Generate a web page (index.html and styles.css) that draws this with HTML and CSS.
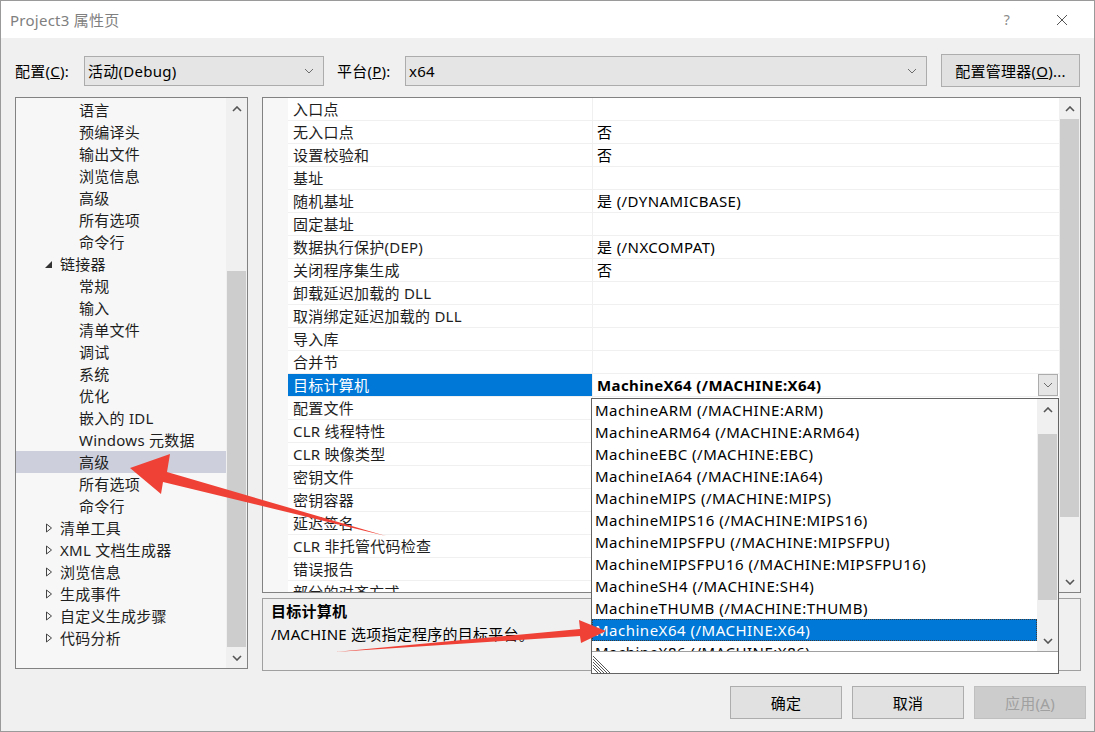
FILE: index.html
```html
<!DOCTYPE html>
<html lang="zh-CN">
<head>
    <meta charset="UTF-8">
    <title>Project3 属性页</title>
    <link rel="stylesheet" href="styles.css">
</head>
<body>
    <div class="window">
        <div class="titlebar">
            <span class="title">Project3 属性页</span>
            <span class="help">?</span>
            <svg class="close" width="12" height="12" viewBox="0 0 12 12">
                <path d="M1 1L11 11M11 1L1 11" stroke="#555" stroke-width="1" fill="none"/>
            </svg>
        </div>

        <div class="toolbar">
            <label class="label label-config">配置(<u>C</u>):</label>
            <div class="combo combo-config">
                <span>活动(Debug)</span>
                <svg class="chev" width="10" height="6" viewBox="0 0 10 6"><path d="M1 1L5 5L9 1" stroke="#6d6d6d" fill="none"/></svg>
            </div>
            <label class="label label-platform">平台(<u>P</u>):</label>
            <div class="combo combo-platform">
                <span>x64</span>
                <svg class="chev" width="10" height="6" viewBox="0 0 10 6"><path d="M1 1L5 5L9 1" stroke="#6d6d6d" fill="none"/></svg>
            </div>
            <button class="btn btn-manager">配置管理器(<u>O</u>)...</button>
        </div>

        <div class="main">
            <div class="tree">
                <ul class="tree-list">
                    <li class="child">语言</li>
                    <li class="child">预编译头</li>
                    <li class="child">输出文件</li>
                    <li class="child">浏览信息</li>
                    <li class="child">高级</li>
                    <li class="child">所有选项</li>
                    <li class="child">命令行</li>
                    <li class="parent"><svg class="exp" width="19" height="22" viewBox="0 0 19 22"><path d="M4 15H11V8Z" fill="#333"/></svg>链接器</li>
                    <li class="child">常规</li>
                    <li class="child">输入</li>
                    <li class="child">清单文件</li>
                    <li class="child">调试</li>
                    <li class="child">系统</li>
                    <li class="child">优化</li>
                    <li class="child">嵌入的 IDL</li>
                    <li class="child">Windows 元数据</li>
                    <li class="child selected">高级</li>
                    <li class="child">所有选项</li>
                    <li class="child">命令行</li>
                    <li class="parent"><svg class="exp" width="19" height="22" viewBox="0 0 19 22"><path d="M5.5 7L10.5 11L5.5 15Z" stroke="#444" fill="none"/></svg>清单工具</li>
                    <li class="parent"><svg class="exp" width="19" height="22" viewBox="0 0 19 22"><path d="M5.5 7L10.5 11L5.5 15Z" stroke="#444" fill="none"/></svg>XML 文档生成器</li>
                    <li class="parent"><svg class="exp" width="19" height="22" viewBox="0 0 19 22"><path d="M5.5 7L10.5 11L5.5 15Z" stroke="#444" fill="none"/></svg>浏览信息</li>
                    <li class="parent"><svg class="exp" width="19" height="22" viewBox="0 0 19 22"><path d="M5.5 7L10.5 11L5.5 15Z" stroke="#444" fill="none"/></svg>生成事件</li>
                    <li class="parent"><svg class="exp" width="19" height="22" viewBox="0 0 19 22"><path d="M5.5 7L10.5 11L5.5 15Z" stroke="#444" fill="none"/></svg>自定义生成步骤</li>
                    <li class="parent"><svg class="exp" width="19" height="22" viewBox="0 0 19 22"><path d="M5.5 7L10.5 11L5.5 15Z" stroke="#444" fill="none"/></svg>代码分析</li>
                </ul>
                <div class="vscroll tree-scroll">
                    <div class="arrow"><svg width="10" height="6" viewBox="0 0 10 6"><path d="M1 5L5 1L9 5" stroke="#555" stroke-width="1.6" fill="none"/></svg></div>
                    <div class="track"><div class="thumb"></div></div>
                    <div class="arrow"><svg width="10" height="6" viewBox="0 0 10 6"><path d="M1 1L5 5L9 1" stroke="#555" stroke-width="1.6" fill="none"/></svg></div>
                </div>
            </div>

            <div class="right">
                <div class="grid">
                    <div class="gutter"></div>
                    <div class="rows">
                        <div class="row"><div class="name">入口点</div><div class="value"></div></div>
                        <div class="row"><div class="name">无入口点</div><div class="value">否</div></div>
                        <div class="row"><div class="name">设置校验和</div><div class="value">否</div></div>
                        <div class="row"><div class="name">基址</div><div class="value"></div></div>
                        <div class="row"><div class="name">随机基址</div><div class="value">是 (/DYNAMICBASE)</div></div>
                        <div class="row"><div class="name">固定基址</div><div class="value"></div></div>
                        <div class="row"><div class="name">数据执行保护(DEP)</div><div class="value">是 (/NXCOMPAT)</div></div>
                        <div class="row"><div class="name">关闭程序集生成</div><div class="value">否</div></div>
                        <div class="row"><div class="name">卸载延迟加载的 DLL</div><div class="value"></div></div>
                        <div class="row"><div class="name">取消绑定延迟加载的 DLL</div><div class="value"></div></div>
                        <div class="row"><div class="name">导入库</div><div class="value"></div></div>
                        <div class="row"><div class="name">合并节</div><div class="value"></div></div>
                        <div class="row active">
                            <div class="name">目标计算机</div>
                            <div class="value">MachineX64 (/MACHINE:X64)
                                <span class="drop-btn"><svg width="10" height="6" viewBox="0 0 10 6"><path d="M1 1L5 5L9 1" stroke="#6d6d6d" fill="none"/></svg></span>
                            </div>
                        </div>
                        <div class="row"><div class="name">配置文件</div><div class="value"></div></div>
                        <div class="row"><div class="name">CLR 线程特性</div><div class="value"></div></div>
                        <div class="row"><div class="name">CLR 映像类型</div><div class="value"></div></div>
                        <div class="row"><div class="name">密钥文件</div><div class="value"></div></div>
                        <div class="row"><div class="name">密钥容器</div><div class="value"></div></div>
                        <div class="row"><div class="name">延迟签名</div><div class="value"></div></div>
                        <div class="row"><div class="name">CLR 非托管代码检查</div><div class="value"></div></div>
                        <div class="row"><div class="name">错误报告</div><div class="value"></div></div>
                        <div class="row"><div class="name">部分的对齐方式</div><div class="value"></div></div>
                    </div>
                    <div class="vscroll grid-scroll">
                        <div class="arrow"><svg width="10" height="6" viewBox="0 0 10 6"><path d="M1 5L5 1L9 5" stroke="#555" stroke-width="1.6" fill="none"/></svg></div>
                        <div class="track"><div class="thumb"></div></div>
                        <div class="arrow"><svg width="10" height="6" viewBox="0 0 10 6"><path d="M1 1L5 5L9 1" stroke="#555" stroke-width="1.6" fill="none"/></svg></div>
                    </div>
                </div>

                <div class="desc">
                    <div class="desc-title">目标计算机</div>
                    <div class="desc-text">/MACHINE 选项指定程序的目标平台。</div>
                </div>

                <div class="dropdown">
                    <div class="drop-body">
                        <ul class="drop-list">
                            <li>MachineARM (/MACHINE:ARM)</li>
                            <li>MachineARM64 (/MACHINE:ARM64)</li>
                            <li>MachineEBC (/MACHINE:EBC)</li>
                            <li>MachineIA64 (/MACHINE:IA64)</li>
                            <li>MachineMIPS (/MACHINE:MIPS)</li>
                            <li>MachineMIPS16 (/MACHINE:MIPS16)</li>
                            <li>MachineMIPSFPU (/MACHINE:MIPSFPU)</li>
                            <li>MachineMIPSFPU16 (/MACHINE:MIPSFPU16)</li>
                            <li>MachineSH4 (/MACHINE:SH4)</li>
                            <li>MachineTHUMB (/MACHINE:THUMB)</li>
                            <li class="picked">MachineX64 (/MACHINE:X64)</li>
                            <li>MachineX86 (/MACHINE:X86)</li>
                        </ul>
                        <div class="vscroll drop-scroll">
                            <div class="arrow"><svg width="10" height="6" viewBox="0 0 10 6"><path d="M1 5L5 1L9 5" stroke="#555" stroke-width="1.6" fill="none"/></svg></div>
                            <div class="track"><div class="thumb"></div></div>
                            <div class="arrow"><svg width="10" height="6" viewBox="0 0 10 6"><path d="M1 1L5 5L9 1" stroke="#555" stroke-width="1.6" fill="none"/></svg></div>
                        </div>
                    </div>
                    <div class="drop-foot">
                        <svg class="grip" width="20" height="19" viewBox="0 0 20 19">
                            <path d="M0 2L17 19M0 5L14 19M0 8L11 19M0 11L8 19M0 14L5 19" stroke="#555" stroke-width="1"/>
                        </svg>
                    </div>
                </div>
            </div>
        </div>

        <div class="buttons">
            <button class="btn">确定</button>
            <button class="btn">取消</button>
            <button class="btn disabled">应用(<u>A</u>)</button>
        </div>
    </div>

    <!-- red annotation arrows drawn over the dialog -->
    <svg class="annotations" width="1095" height="732" viewBox="0 0 1095 732">
        <path d="M130 468L170 454L167 472L386 536L163 482L161 494Z" fill="#ef4136"/>
        <path d="M335 652L580 629L579 620L606 631L581 643L580 636Z" fill="#ef4136"/>
    </svg>
</body>
</html>
```

FILE: styles.css
```css
* {
    margin: 0;
    padding: 0;
    box-sizing: border-box;
}

body {
    font-family: "Noto Sans", "Noto Sans CJK SC", sans-serif;
    font-size: 15px;
    letter-spacing: 0.25px;
    color: #000;
    background: #f0f0f0;
}

ul {
    list-style: none;
}

u {
    text-decoration: underline;
}

.window {
    width: 1095px;
    height: 732px;
    border: 1px solid #9a9a9a;
    background: #f0f0f0;
    position: relative;
}

/* title bar */
.titlebar {
    height: 37px;
    background: #fff;
    display: flex;
    align-items: center;
    padding-left: 9px;
}

.title {
    color: #808080;
    flex: 1;
}

.help {
    color: #8a8a8a;
    font-size: 14px;
    margin-right: 46px;
}

.close {
    margin-right: 26px;
}

/* config row */
.toolbar {
    display: flex;
    align-items: center;
    height: 33px;
    margin-top: 16px;
    padding-left: 14px;
}

.label {
    white-space: nowrap;
}

.label-config {
    width: 69px;
}

.label-platform {
    width: 68px;
}

.combo {
    height: 30px;
    background: #e5e5e5;
    border: 1px solid #acacac;
    display: flex;
    align-items: center;
    justify-content: space-between;
    padding: 0 9px 0 3px;
}

.combo-config {
    width: 240px;
    margin-right: 13px;
}

.combo-platform {
    width: 522px;
    margin-right: 14px;
}

.btn {
    font-family: inherit;
    font-size: 15px;
    letter-spacing: inherit;
    color: #000;
    background: #e1e1e1;
    border: 1px solid #adadad;
    height: 33px;
    width: 112px;
}

.btn-manager {
    width: 139px;
}

.btn.disabled {
    background: #cccccc;
    border-color: #bfbfbf;
    color: #a0a0a0;
}

/* main panes */
.main {
    display: flex;
    margin-top: 10px;
    padding-left: 14px;
    height: 572px;
}

.tree {
    width: 233px;
    height: 572px;
    border: 1px solid #828282;
    background: #f7f7f7;
    display: flex;
    overflow: hidden;
}

.tree-list {
    width: 210px;
    padding-top: 1px;
    color: #1e1e1e;
}

.tree-list li {
    height: 22px;
    line-height: 22px;
    white-space: nowrap;
    display: flex;
    align-items: center;
}

.tree-list .child {
    padding-left: 63px;
}

.tree-list .parent {
    padding-left: 25px;
}

.tree-list .selected {
    background: #cdd0dc;
}

.exp {
    flex-shrink: 0;
}

/* scrollbars */
.vscroll {
    display: flex;
    flex-direction: column;
    background: #f0f0f0;
}

.vscroll .arrow {
    height: 21px;
    display: flex;
    align-items: center;
    justify-content: center;
}

.vscroll .track {
    flex: 1;
    display: flex;
    flex-direction: column;
}

.vscroll .thumb {
    background: #cdcdcd;
    margin: 0 1px;
}

.tree-scroll {
    width: 21px;
}

.tree-scroll .track {
    padding-top: 152px;
}

.tree-scroll .thumb {
    flex: 1;
}

.right {
    width: 819px;
    margin-left: 14px;
    position: relative;
}

.grid {
    height: 496px;
    border: 1px solid #828282;
    background: #fff;
    display: flex;
    overflow: hidden;
}

.gutter {
    width: 25px;
    background: #f7f7f7;
}

.rows {
    width: 771px;
}

.row {
    display: flex;
    height: 23px;
    border-bottom: 1px solid #f0f0f0;
    line-height: 22px;
    white-space: nowrap;
}

.name {
    width: 304px;
    padding-left: 5px;
    color: #1e1e1e;
}

.value {
    flex: 1;
    padding-left: 4px;
    border-left: 1px solid #f0f0f0;
    letter-spacing: 0.4px;
    position: relative;
}

.row.active .name {
    background: #0078d7;
    color: #fff;
}

.row.active .value {
    font-weight: bold;
}

.drop-btn {
    position: absolute;
    right: 1px;
    top: 0;
    width: 20px;
    height: 22px;
    background: #e5e5e5;
    border: 1px solid #acacac;
    display: flex;
    align-items: center;
    justify-content: center;
}

.grid-scroll {
    width: 21px;
}

.grid-scroll .track {
    padding-bottom: 54px;
}

.grid-scroll .thumb {
    flex: 1;
}

.desc {
    height: 73px;
    margin-top: 5px;
    border: 1px solid #a0a0a0;
    padding: 1px 8px;
    line-height: 23px;
}

.desc-title {
    font-weight: bold;
}

/* open drop-down list */
.dropdown {
    position: absolute;
    left: 329px;
    top: 301px;
    width: 468px;
    height: 276px;
    border: 1px solid #646464;
    background: #fff;
}

.drop-body {
    display: flex;
    height: 253px;
    border-bottom: 1px solid #a0a0a0;
}

.drop-list {
    width: 445px;
    height: 252px;
    overflow: hidden;
    letter-spacing: 0.5px;
}

.drop-list li {
    height: 22px;
    line-height: 22px;
    padding-left: 3px;
    white-space: nowrap;
}

.drop-list .picked {
    background: #0078d7;
    color: #fff;
    border: 1px dotted #3a3a3a;
    line-height: 20px;
    padding-left: 2px;
}

.drop-scroll {
    width: 21px;
}

.drop-scroll .track {
    padding-top: 14px;
    padding-bottom: 30px;
}

.drop-scroll .thumb {
    flex: 1;
}

.drop-foot {
    height: 21px;
    display: flex;
    align-items: flex-end;
}

.grip {
    margin-left: 1px;
}

.buttons {
    display: flex;
    justify-content: flex-end;
    gap: 10px;
    margin-top: 17px;
    padding-right: 8px;
}

.annotations {
    position: absolute;
    left: 0;
    top: 0;
    pointer-events: none;
}
```
